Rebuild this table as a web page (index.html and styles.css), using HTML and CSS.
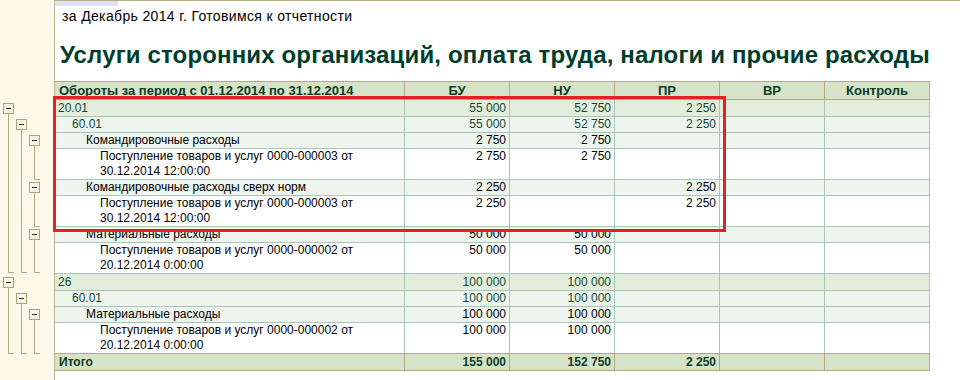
FILE: index.html
```html
<!DOCTYPE html>
<html lang="ru">
<head>
<meta charset="utf-8">
<title>Отчет</title>
<link rel="stylesheet" href="styles.css">
</head>
<body>
<div class="page">
  <aside class="gutter">
    <svg width="54" height="380" viewBox="0 0 54 380" xmlns="http://www.w3.org/2000/svg">
      <path class="tree-line" d="M8.5 114V272.5H14 M21.5 130V272.5H27 M34.5 146V179.5H40 M34.5 193V226.5H40 M34.5 240V272.5H40 M8.5 288V353.5H14 M21.5 304V353.5H27 M34.5 320V353.5H40"/>
      <g class="tree-box"><rect x="3.5" y="103.5" width="10" height="10"/><path d="M6 108.5H11"/></g>
      <g class="tree-box"><rect x="16.5" y="119.5" width="10" height="10"/><path d="M19 124.5H24"/></g>
      <g class="tree-box"><rect x="29.5" y="135.5" width="10" height="10"/><path d="M32 140.5H37"/></g>
      <g class="tree-box"><rect x="29.5" y="182.5" width="10" height="10"/><path d="M32 187.5H37"/></g>
      <g class="tree-box"><rect x="29.5" y="229.5" width="10" height="10"/><path d="M32 234.5H37"/></g>
      <g class="tree-box"><rect x="3.5" y="277.5" width="10" height="10"/><path d="M6 282.5H11"/></g>
      <g class="tree-box"><rect x="16.5" y="293.5" width="10" height="10"/><path d="M19 298.5H24"/></g>
      <g class="tree-box"><rect x="29.5" y="309.5" width="10" height="10"/><path d="M32 314.5H37"/></g>
    </svg>
  </aside>
  <main class="main">
    <div class="tab-stub"></div>
    <p class="subtitle">за Декабрь 2014 г. Готовимся к отчетности</p>
    <h1 class="title">Услуги сторонних организаций, оплата труда, налоги и прочие расходы</h1>
    <div class="report">
      <div class="row head">
        <div class="name">Обороты за период с 01.12.2014 по 31.12.2014</div>
        <div>БУ</div><div>НУ</div><div>ПР</div><div>ВР</div><div>Контроль</div>
      </div>
      <div class="row l1">
        <div class="name">20.01</div><div>55 000</div><div>52 750</div><div>2 250</div><div></div><div></div>
      </div>
      <div class="row l2">
        <div class="name">60.01</div><div>55 000</div><div>52 750</div><div>2 250</div><div></div><div></div>
      </div>
      <div class="row l3">
        <div class="name">Командировочные расходы</div><div>2 750</div><div>2 750</div><div></div><div></div><div></div>
      </div>
      <div class="row doc">
        <div class="name">Поступление товаров и услуг 0000-000003 от<br>30.12.2014 12:00:00</div><div>2 750</div><div>2 750</div><div></div><div></div><div></div>
      </div>
      <div class="row l3">
        <div class="name">Командировочные расходы сверх норм</div><div>2 250</div><div></div><div>2 250</div><div></div><div></div>
      </div>
      <div class="row doc">
        <div class="name">Поступление товаров и услуг 0000-000003 от<br>30.12.2014 12:00:00</div><div>2 250</div><div></div><div>2 250</div><div></div><div></div>
      </div>
      <div class="row l3">
        <div class="name">Материальные расходы</div><div>50 000</div><div>50 000</div><div></div><div></div><div></div>
      </div>
      <div class="row doc">
        <div class="name">Поступление товаров и услуг 0000-000002 от<br>20.12.2014 0:00:00</div><div>50 000</div><div>50 000</div><div></div><div></div><div></div>
      </div>
      <div class="row l1">
        <div class="name">26</div><div>100 000</div><div>100 000</div><div></div><div></div><div></div>
      </div>
      <div class="row l2">
        <div class="name">60.01</div><div>100 000</div><div>100 000</div><div></div><div></div><div></div>
      </div>
      <div class="row l3">
        <div class="name">Материальные расходы</div><div>100 000</div><div>100 000</div><div></div><div></div><div></div>
      </div>
      <div class="row doc pre-total">
        <div class="name">Поступление товаров и услуг 0000-000002 от<br>20.12.2014 0:00:00</div><div>100 000</div><div>100 000</div><div></div><div></div><div></div>
      </div>
      <div class="row total">
        <div class="name">Итого</div><div>155 000</div><div>152 750</div><div>2 250</div><div></div><div></div>
      </div>
    </div>
  </main>
  <div class="highlight"></div>
</div>
</body>
</html>
```
FILE: styles.css
```css
html, body {
  margin: 0;
  background: #ffffff;
  font-family: "Liberation Sans", Arial, sans-serif;
}

.page {
  position: relative;
  display: flex;
  width: 960px;
  height: 380px;
  overflow: hidden;
}

.gutter {
  flex: none;
  width: 54px;
  background: #fcf9ea;
  border-right: 1px solid #bdb38c;
}

.gutter svg {
  display: block;
}

.tree-line {
  fill: none;
  stroke: #b4aa80;
  stroke-width: 1;
}

.tree-box rect {
  fill: #f8f5e8;
  stroke: #aca37d;
  stroke-width: 1;
}

.tree-box path {
  stroke: #2e2810;
  stroke-width: 1;
}

.main {
  flex: 1;
  min-width: 0;
  border-top: 1px solid #b9ad86;
}

.tab-stub {
  width: 63px;
  height: 5px;
  background: #dfe2f4;
}

.subtitle {
  margin: 3px 0 0 7px;
  font-size: 14px;
  line-height: 15px;
  letter-spacing: 0.35px;
  color: #000;
}

.title {
  margin: 17px 0 0 5px;
  font-size: 24px;
  line-height: 28px;
  font-weight: bold;
  letter-spacing: 0.15px;
  color: #003d2b;
  white-space: nowrap;
}

.report {
  margin-top: 12px;
  width: 875px;
}

.row {
  display: grid;
  grid-template-columns: 350px repeat(5, 105px);
  border-bottom: 1px solid #a8c7b9;
  font-size: 12px;
  line-height: 15px;
  color: #000;
}

.row > div {
  box-sizing: border-box;
  border-right: 1px solid #a8c7b9;
  padding: 0 3px 0 0;
  text-align: right;
  white-space: nowrap;
}

.row > .name {
  text-align: left;
}

.head {
  background: #d6e3c8;
  border-top: 1px solid #b5aa7f;
  border-bottom-color: #b5aa7f;
  font-size: 13px;
  font-weight: bold;
  line-height: 17px;
  color: #0b3e27;
}

.head > div {
  border-right-color: #b5aa7f;
  padding: 0;
  text-align: center;
}

.head > .name {
  padding-left: 4px;
}

.l1 {
  background: #e2eddb;
  line-height: 16px;
  color: #164a30;
}

.l1 > .name { padding-left: 3px; }

.l2 {
  background: #eef4ee;
  color: #164a30;
}

.l2 > .name { padding-left: 17px; }

.l3 {
  background: #eef4ee;
}

.l3 > .name { padding-left: 31px; }

.doc {
  background: #ffffff;
}

.doc > .name { padding-left: 45px; }

.pre-total {
  border-bottom-color: #b5aa7f;
}

.total {
  background: #d6e3c8;
  border-bottom-color: #b5aa7f;
  font-weight: bold;
  line-height: 16px;
  color: #0b3e27;
}

.total > div {
  border-right-color: #b5aa7f;
}

.total > .name { padding-left: 4px; }

.highlight {
  position: absolute;
  left: 53px;
  top: 96px;
  width: 673px;
  height: 136px;
  box-sizing: border-box;
  border: 3px solid #e41f26;
}
```
